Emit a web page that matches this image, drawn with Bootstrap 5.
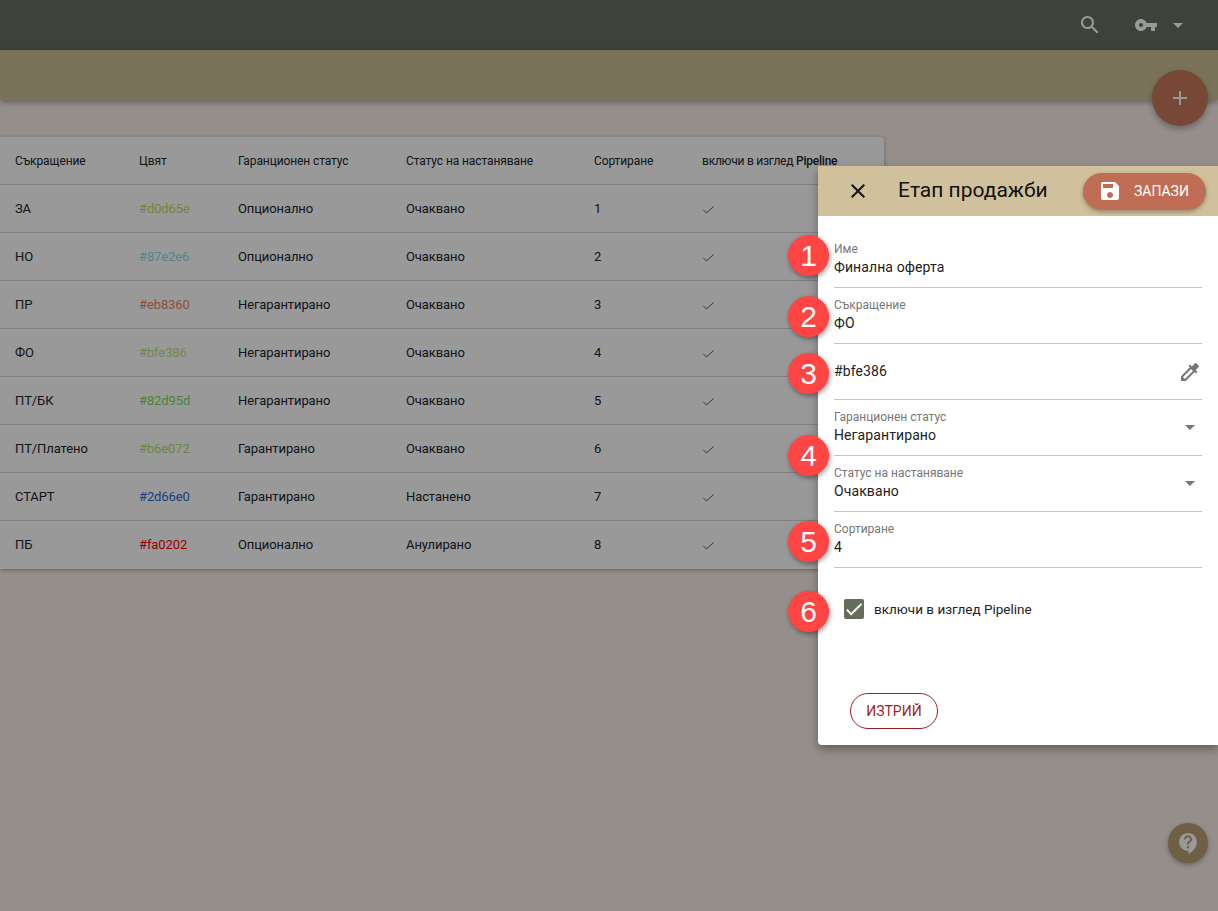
<!DOCTYPE html>
<html lang="bg">
  <head>
    <meta charset="UTF-8" />
    <meta name="viewport" content="width=device-width, initial-scale=1.0" />
    <title>Етапи на продажби</title>
    <link rel="stylesheet" href="https://cdn.jsdelivr.net/npm/bootstrap@5.3.0/dist/css/bootstrap.min.css" />
    <style>
      body { font-family: Roboto, "Liberation Sans", sans-serif; background: #f8efe8; color: #111; height: 911px; overflow: hidden; position: relative; }
      .top-bar { height: 50px; background: #677060; padding-right: 28px; }
      .sub-bar { height: 50px; background: #cbc094; box-shadow: 0 2px 6px rgba(0,0,0,.35); }
      .icon-light { fill: #fff; }
      .key-gap { margin-left: 32px; }
      .fab-add { position: absolute; left: 1152px; top: 70px; width: 56px; height: 56px; background: #c6785b; box-shadow: 0 3px 6px rgba(0,0,0,.3); }
      .fab-help { position: absolute; left: 1168px; top: 823px; width: 40px; height: 40px; background: #b89f74; box-shadow: 0 2px 5px rgba(0,0,0,.3); }
      .stage-card { width: 884px; margin-top: 37px; border-radius: 0 4px 4px 0; box-shadow: 0 1px 4px rgba(0,0,0,.35); overflow: hidden; background: #fff; }
      .stage-table { table-layout: fixed; width: 885px; margin: 0; font-size: 13px; letter-spacing: -.1px; --bs-table-bg: transparent; }
      .stage-table th { font-size: 12px; font-weight: 400; height: 47px; vertical-align: middle; padding: 2px 0 0; border-bottom: 1px solid #d8d8d8; }
      .stage-table td { height: 48px; vertical-align: middle; padding: 2px 0 0; border-bottom: 1px solid #d8d8d8; }
      .stage-table tr:last-child td { border-bottom-color: transparent; }
      .stage-table th:first-child, .stage-table td:first-child { padding-left: 15px; }
      .w-a { width: 139px; } .w-b { width: 99px; } .w-c { width: 168px; } .w-d { width: 188px; } .w-e { width: 108px; }
      .stage-table th.pipe-head { letter-spacing: -.23px; }
      .tick { display: block; margin-left: 1px; margin-top: 1px; width: 11px; height: 8px; fill: none; stroke: #4d5a3c; stroke-width: 1; }
      .dim-layer { position: absolute; inset: 0; background: rgba(0,0,0,.4); }
      .stage-panel { position: absolute; left: 818px; top: 166px; width: 400px; height: 579px; background: #fff; border-radius: 0 0 0 4px; box-shadow: 0 4px 10px rgba(0,0,0,.35); }
      .panel-head { height: 50px; background: #d0c19c; padding-left: 28px; padding-right: 12px; }
      .panel-title { font-size: 21px; color: #111; margin-left: 28px; }
      .btn-save { width: 123px; height: 37px; border-radius: 19px; background: #bf6e55; color: #fff; font-size: 14px; font-weight: 400; box-shadow: 0 2px 4px rgba(0,0,0,.3); border: 0; padding: 0 0 0 15px; }
      .save-gap { margin-right: 12px; }
      .panel-body { padding: 16px 16px 0; }
      .stage-field { position: relative; height: 56px; padding-top: 10px; border-bottom: 1px solid #c4c4c4; }
      .field-label { font-size: 12px; line-height: 14px; color: #777; }
      .field-value { font-size: 14px; line-height: 17px; letter-spacing: .1px; color: #222; margin-top: 3px; }
      .field-plain { padding-top: 9px; margin-top: 0; }
      .field-icon { position: absolute; right: 0; top: 15px; fill: #757575; }
      .icon-picker { top: 16px; }
      .step-dot { position: absolute; left: -46px; width: 41px; height: 41px; border-radius: 50%; background: #ff4444; color: #fff; font-family: "Liberation Sans", sans-serif; font-size: 30px; line-height: 41px; text-align: center; box-shadow: 1px 2px 5px rgba(0,0,0,.4); }
      .dot-1 { top: 3px; } .dot-2 { top: 8px; } .dot-3 { top: 9px; } .dot-4 { top: 35px; } .dot-5 { top: 9px; } .dot-6 { top: -8px; left: -46px; }
      .pipeline-row { position: relative; margin-top: 31px; height: 20px; font-size: 13.5px; color: #222; }
      .box-on { width: 20px; height: 20px; margin-left: 10px; background: #636d59; border-radius: 2px; margin-right: 10px; }
      .box-on svg { flex: none; }
      .btn-erase { width: 88px; height: 36px; border-radius: 18px; border: 1px solid #a21f1f; color: #a21f1f; background: #fff; font-size: 14px; padding: 0; margin: 74px 0 0 16px; }
    </style>
  </head>

  <body>
    <!-- Горна лента -->
    <div class="top-bar d-flex align-items-center justify-content-end">
      <svg class="icon-light" width="24" height="24" viewBox="0 0 24 24"><path d="M15.5 14h-.79l-.28-.27C15.41 12.59 16 11.11 16 9.5 16 5.91 13.09 3 9.5 3S3 5.91 3 9.5 5.91 16 9.5 16c1.61 0 3.09-.59 4.23-1.57l.27.28v.79l5 4.99L20.49 19l-4.99-5zm-6 0C7.01 14 5 11.99 5 9.5S7.01 5 9.5 5 14 7.01 14 9.5 11.99 14 9.5 14z"/></svg>
      <svg class="icon-light key-gap" width="24" height="24" viewBox="0 0 24 24"><path d="M12.65 10C11.83 7.67 9.61 6 7 6c-3.31 0-6 2.69-6 6s2.69 6 6 6c2.61 0 4.83-1.67 5.65-4H17v4h4v-4h2v-4H12.65zM7 14c-1.1 0-2-.9-2-2s.9-2 2-2 2 .9 2 2-.9 2-2 2z"/></svg>
      <svg class="icon-light ms-2" width="24" height="24" viewBox="0 0 24 24"><path d="M7 10l5 5 5-5z"/></svg>
    </div>
    <div class="sub-bar"></div>

    <button class="fab-add btn rounded-circle p-0 d-flex align-items-center justify-content-center border-0">
      <svg class="icon-light" width="24" height="24" viewBox="0 0 24 24"><path d="M19 13h-6v6h-2v-6H5v-2h6V5h2v6h6v2z"/></svg>
    </button>

    <!-- Таблица с етапи -->
    <div class="stage-card">
      <table class="table stage-table">
        <thead>
          <tr>
            <th class="w-a">Съкращение</th>
            <th class="w-b">Цвят</th>
            <th class="w-c">Гаранционен статус</th>
            <th class="w-d">Статус на настаняване</th>
            <th class="w-e">Сортиране</th>
            <th class="pipe-head">включи в изглед <span class="fw-medium">Pipeline</span></th>
          </tr>
        </thead>
        <tbody id="stageRows"></tbody>
      </table>
    </div>

    <button class="fab-help btn rounded-circle p-0 d-flex align-items-center justify-content-center border-0">
      <svg class="icon-light" width="25" height="25" viewBox="0 0 24 24"><path d="M11.5 2C6.81 2 3 5.81 3 10.5S6.81 19 11.5 19h.5v3c4.86-2.34 8-7 8-11.5C20 5.81 16.19 2 11.5 2zm1 14.5h-2v-2h2v2zm0-3.5h-2c0-3.25 3-3 3-5 0-1.1-.9-2-2-2s-2 .9-2 2h-2c0-2.21 1.79-4 4-4s4 1.79 4 4c0 2.5-3 2.75-3 5z"/></svg>
    </button>

    <div class="dim-layer"></div>

    <!-- Панел за редакция -->
    <div class="stage-panel">
      <div class="panel-head d-flex align-items-center">
        <svg width="24" height="24" viewBox="0 0 24 24" fill="#111"><path d="M19 6.41L17.59 5 12 10.59 6.41 5 5 6.41 10.59 12 5 17.59 6.41 19 12 13.41 17.59 19 19 17.59 13.41 12z"/></svg>
        <div class="panel-title flex-grow-1">Етап продажби</div>
        <button class="btn-save d-flex align-items-center">
          <svg class="icon-light save-gap" width="24" height="24" viewBox="0 0 24 24"><path d="M17 3H5c-1.11 0-2 .9-2 2v14c0 1.1.89 2 2 2h14c1.1 0 2-.9 2-2V7l-4-4zm-5 16c-1.66 0-3-1.34-3-3s1.34-3 3-3 3 1.34 3 3-1.34 3-3 3zm3-10H5V5h10v4z"/></svg>
          ЗАПАЗИ
        </button>
      </div>
      <div class="panel-body">
        <div class="stage-field">
          <div class="step-dot dot-1">1</div>
          <div class="field-label">Име</div>
          <div class="field-value">Финална оферта</div>
        </div>
        <div class="stage-field">
          <div class="step-dot dot-2">2</div>
          <div class="field-label">Съкращение</div>
          <div class="field-value">ФО</div>
        </div>
        <div class="stage-field">
          <div class="step-dot dot-3">3</div>
          <div class="field-value field-plain">#bfe386</div>
          <svg class="field-icon icon-picker" width="24" height="24" viewBox="0 0 24 24"><path d="M20.71 5.63l-2.34-2.34c-.39-.39-1.02-.39-1.41 0l-3.12 3.12-1.93-1.91-1.41 1.41 1.42 1.42L3 16.25V21h4.75l8.92-8.92 1.42 1.42 1.41-1.41-1.92-1.92 3.12-3.12c.4-.4.4-1.03.01-1.42zM6.92 19L5 17.08l8.06-8.06 1.92 1.92L6.92 19z"/></svg>
        </div>
        <div class="stage-field">
          <div class="step-dot dot-4">4</div>
          <div class="field-label">Гаранционен статус</div>
          <div class="field-value">Негарантирано</div>
          <svg class="field-icon" width="24" height="24" viewBox="0 0 24 24"><path d="M7 10l5 5 5-5z"/></svg>
        </div>
        <div class="stage-field">
          <div class="field-label">Статус на настаняване</div>
          <div class="field-value">Очаквано</div>
          <svg class="field-icon" width="24" height="24" viewBox="0 0 24 24"><path d="M7 10l5 5 5-5z"/></svg>
        </div>
        <div class="stage-field">
          <div class="step-dot dot-5">5</div>
          <div class="field-label">Сортиране</div>
          <div class="field-value">4</div>
        </div>
        <div class="pipeline-row d-flex align-items-center">
          <div class="step-dot dot-6">6</div>
          <span class="box-on d-flex align-items-center justify-content-center">
            <svg width="22" height="22" viewBox="0 0 24 24" fill="#fff"><path d="M9 16.17L4.83 12l-1.42 1.41L9 19 21 7l-1.41-1.41z"/></svg>
          </span>
          включи в изглед Pipeline
        </div>
        <button class="btn-erase">ИЗТРИЙ</button>
      </div>
    </div>

    <script>
      // Редове на таблицата
      const stages = [
        ["ЗА", "#d0d65e", "Опционално", "Очаквано", 1],
        ["НО", "#87e2e6", "Опционално", "Очаквано", 2],
        ["ПР", "#eb8360", "Негарантирано", "Очаквано", 3],
        ["ФО", "#bfe386", "Негарантирано", "Очаквано", 4],
        ["ПТ/БК", "#82d95d", "Негарантирано", "Очаквано", 5],
        ["ПТ/Платено", "#b6e072", "Гарантирано", "Очаквано", 6],
        ["СТАРТ", "#2d66e0", "Гарантирано", "Настанено", 7],
        ["ПБ", "#fa0202", "Опционално", "Анулирано", 8],
      ];
      const tick = '<svg class="tick" viewBox="0 0 11 8"><path d="M.5 4l3 3L10.5 .5"/></svg>';
      document.getElementById("stageRows").innerHTML = stages
        .map((s) => `<tr><td>${s[0]}</td><td style="color:${s[1]}">${s[1]}</td><td>${s[2]}</td><td>${s[3]}</td><td>${s[4]}</td><td>${tick}</td></tr>`)
        .join("");
    </script>
  </body>
</html>
